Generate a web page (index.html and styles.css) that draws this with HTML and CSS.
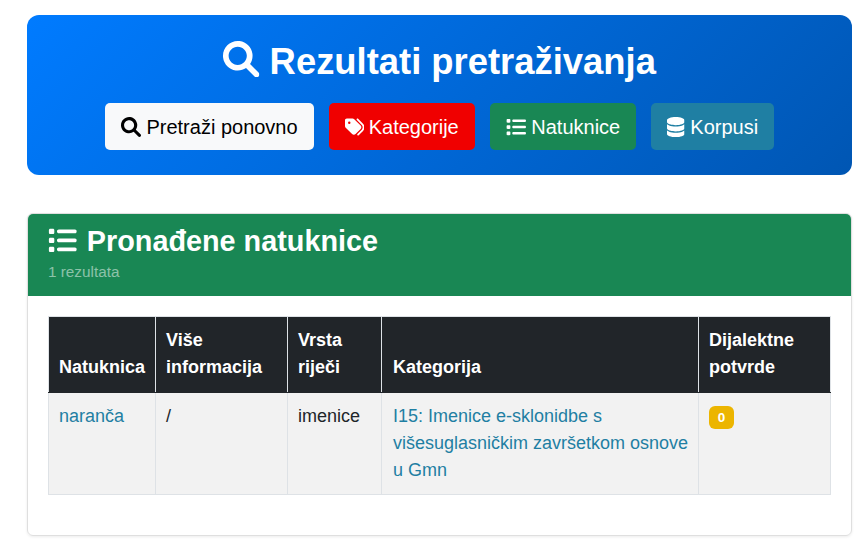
FILE: index.html
```html
<!DOCTYPE html>
<html lang="hr">
<head>
<meta charset="utf-8">
<title>Rezultati pretraživanja</title>
<link rel="stylesheet" href="styles.css">
</head>
<body>
<svg class="defs" width="0" height="0" aria-hidden="true">
  <symbol id="i-search" viewBox="0 0 512 512"><path d="M500.3 443.7l-119.7-119.7c27.22-40.41 40.65-90.9 33.46-144.7C401.8 87.79 326.8 13.32 235.2 1.723C99.01-15.51-15.51 99.01 1.724 235.2c11.6 91.64 86.08 166.7 177.6 178.9c53.8 7.189 104.3-6.236 144.7-33.46l119.7 119.7c15.62 15.62 40.95 15.62 56.57 0C515.9 484.7 515.9 459.3 500.3 443.7zM79.1 208c0-70.58 57.42-128 128-128s128 57.42 128 128c0 70.58-57.42 128-128 128S79.1 278.6 79.1 208z"/></symbol>
  <symbol id="i-tags" viewBox="0 0 512 512"><path d="M345 39.1L472.8 168.4c52.4 53 52.4 138.2 0 191.2L360.8 472.9c-9.3 9.4-24.5 9.5-33.9 .2s-9.5-24.5-.2-33.9L438.6 325.9c33.9-34.3 33.9-89.4 0-123.7L310.9 72.9c-9.3-9.4-9.2-24.6 .2-33.9s24.6-9.2 33.9 .2zM0 229.5V80C0 53.5 21.5 32 48 32H197.5c17 0 33.3 6.7 45.3 18.7l168 168c25 25 25 65.5 0 90.5L277.3 442.7c-25 25-65.5 25-90.5 0l-168-168C6.7 262.7 0 246.5 0 229.5zM144 144a32 32 0 1 0 -64 0 32 32 0 1 0 64 0z"/></symbol>
  <symbol id="i-list" viewBox="0 0 512 512"><path d="M40 48C26.7 48 16 58.7 16 72v48c0 13.3 10.7 24 24 24H88c13.3 0 24-10.7 24-24V72c0-13.3-10.7-24-24-24H40zM192 64c-17.7 0-32 14.3-32 32s14.3 32 32 32H480c17.7 0 32-14.3 32-32s-14.3-32-32-32H192zm0 160c-17.7 0-32 14.3-32 32s14.3 32 32 32H480c17.7 0 32-14.3 32-32s-14.3-32-32-32H192zm0 160c-17.7 0-32 14.3-32 32s14.3 32 32 32H480c17.7 0 32-14.3 32-32s-14.3-32-32-32H192zM16 232v48c0 13.3 10.7 24 24 24H88c13.3 0 24-10.7 24-24V232c0-13.3-10.7-24-24-24H40c-13.3 0-24 10.7-24 24zM40 368c-13.3 0-24 10.7-24 24v48c0 13.3 10.7 24 24 24H88c13.3 0 24-10.7 24-24V392c0-13.3-10.7-24-24-24H40z"/></symbol>
  <symbol id="i-db" viewBox="0 0 448 512"><path d="M448 80v48c0 44.2-100.3 80-224 80S0 172.2 0 128V80C0 35.8 100.3 0 224 0S448 35.8 448 80zM393.2 214.7c20.8-7.4 39.9-16.9 54.8-28.6V288c0 44.2-100.3 80-224 80S0 332.2 0 288V186.1c14.9 11.8 34 21.2 54.8 28.6C99.7 230.7 159.5 240 224 240s124.3-9.3 169.2-25.3zM0 346.1c14.9 11.8 34 21.2 54.8 28.6C99.7 390.7 159.5 400 224 400s124.3-9.3 169.2-25.3c20.8-7.4 39.9-16.9 54.8-28.6V432c0 44.2-100.3 80-224 80S0 476.2 0 432V346.1z"/></symbol>
</svg>
<main class="page">
  <header class="hero">
    <h1 class="hero-title"><svg class="ic ic-hero"><use href="#i-search"/></svg> Rezultati pretraživanja</h1>
    <nav class="hero-actions">
      <a class="btn btn-light" href="#"><svg class="ic"><use href="#i-search"/></svg> Pretraži ponovno</a>
      <a class="btn btn-red" href="#"><svg class="ic ic-tags"><use href="#i-tags"/></svg> Kategorije</a>
      <a class="btn btn-green" href="#"><svg class="ic"><use href="#i-list"/></svg> Natuknice</a>
      <a class="btn btn-teal" href="#"><svg class="ic ic-db"><use href="#i-db"/></svg> Korpusi</a>
    </nav>
  </header>
  <section class="card">
    <div class="card-head">
      <h2 class="card-title"><svg class="ic ic-card"><use href="#i-list"/></svg> Pronađene natuknice</h2>
      <div class="card-sub">1 rezultata</div>
    </div>
    <div class="card-body">
      <table class="results">
        <thead>
          <tr>
            <th class="c1">Natuknica</th>
            <th class="c2">Više informacija</th>
            <th class="c3">Vrsta riječi</th>
            <th class="c4 cat">Kategorija</th>
            <th class="c5">Dijalektne potvrde</th>
          </tr>
        </thead>
        <tbody>
          <tr>
            <td><a href="#">naranča</a></td>
            <td>/</td>
            <td>imenice</td>
            <td class="cat"><a href="#">I15: Imenice e-sklonidbe s višesuglasničkim završetkom osnove u Gmn</a></td>
            <td><span class="badge">0</span></td>
          </tr>
        </tbody>
      </table>
    </div>
  </section>
</main>
</body>
</html>
```
FILE: styles.css
```css
* { box-sizing: border-box; }
html, body { margin: 0; padding: 0; }
body {
  font-family: "Liberation Sans", Arial, sans-serif;
  font-size: 18px;
  line-height: 27px;
  color: #212529;
  background: #fff;
}
.defs { position: absolute; }
.page { padding: 15px 16px 14px 27px; }
.ic { width: 20px; height: 20px; fill: currentColor; vertical-align: -3px; }
.ic-db { width: 17.5px; }
.ic-tags { width: 19.5px; margin-right: -1px; }
.hero {
  height: 160px;
  padding-top: 22px;
  border-radius: 12px;
  background: linear-gradient(135deg, #007bff, #0056b3);
  color: #fff;
  text-align: center;
}
.hero-title {
  margin: 0 0 17px;
  font-size: 36.4px;
  line-height: 49px;
  font-weight: 700;
}
.ic-hero { width: 36.4px; height: 36.4px; vertical-align: -3px; }
.hero-actions { display: flex; justify-content: center; gap: 15px; }
.btn {
  display: block;
  height: 47px;
  padding: 11px 16px 9px;
  border-radius: 5px;
  font-size: 20px;
  line-height: 27px;
  text-decoration: none;
}
.btn-light { background: #f8f9fa; color: #000; }
.btn-red { background: #f00000; color: #fff; }
.btn-green { background: #198754; color: #fff; }
.btn-teal { background: #1f7fa3; color: #fff; }
.card {
  margin-top: 38px;
  border: 1px solid #dfdfdf;
  border-radius: 6px;
  box-shadow: 0 1px 3px rgba(0,0,0,.08);
}
.card-head {
  height: 82px;
  padding: 9px 20px 0;
  background: #198754;
  color: #fff;
  border-radius: 5px 5px 0 0;
}
.card-title {
  margin: 0;
  font-size: 28.8px;
  line-height: 36px;
  font-weight: 700;
}
.ic-card { width: 28.8px; height: 28.8px; margin-right: 2px; vertical-align: -4px; }
.card-sub { margin-top: 2px; font-size: 15.3px; line-height: 21px; color: rgba(255,255,255,.5); }
.card-body { padding: 20px 20px 40px; }
.results { width: 782px; border-collapse: collapse; table-layout: fixed; }
.results th, .results td {
  padding: 10px;
  text-align: left;
}
.results th {
  padding-bottom: 11px;
  vertical-align: bottom;
  background: #212529;
  color: #fff;
  font-weight: 700;
  border: 1px solid #dee2e6;
  border-bottom: 1px solid #212529;
}
.results td {
  vertical-align: top;
  background: #f2f2f2;
  border: 1px solid #dee2e6;
}
.results .cat { padding-left: 11px; padding-right: 8px; }
.results a { color: #1f7fa3; text-decoration: none; }
.c1 { width: 107px; }
.c2 { width: 132px; }
.c3 { width: 94px; }
.c4 { width: 317px; }
.c5 { width: 132px; }
.badge {
  display: inline-block;
  padding: 4.7px 8.8px;
  border-radius: 6px;
  background: #ecb500;
  color: #fff;
  font-size: 13.5px;
  line-height: 13.5px;
  font-weight: 700;
  vertical-align: top;
  margin-top: 3px;
}
```
